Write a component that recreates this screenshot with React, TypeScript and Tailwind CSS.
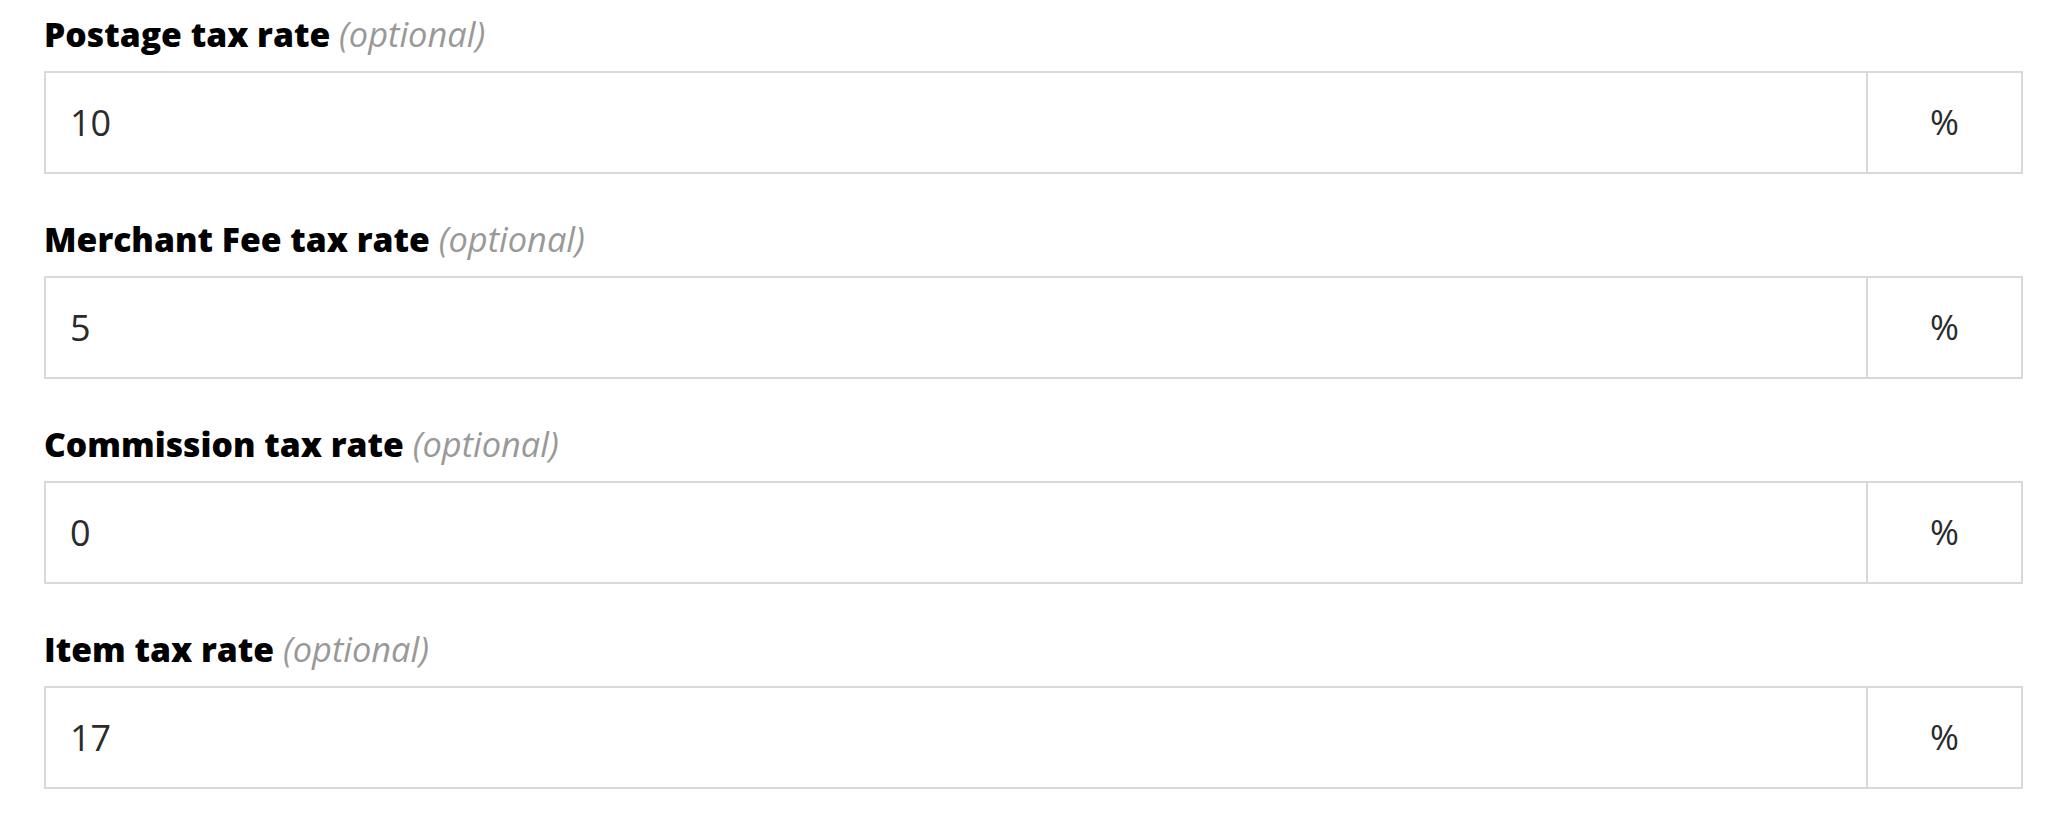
import React from "react";

const rows = [
  { label: "Postage tax rate", value: "10" },
  { label: "Merchant Fee tax rate", value: "5" },
  { label: "Commission tax rate", value: "0" },
  { label: "Item tax rate", value: "17" },
];

export default function App() {
  return (
    <div
      className="w-[2056px] h-[820px] bg-white pt-[10px] pl-[44px] pr-[33px]"
      style={{ fontFamily: '"Open Sans", "Noto Sans", sans-serif' }}
    >
      {rows.map((r) => (
        <div key={r.label} className="mb-[41px]">
          <div className="text-[34px] leading-[48px] mb-[13px] text-black">
            <span className="font-extrabold text-[33.7px]">{r.label}</span>{" "}
            <span className="italic text-[#999999] font-normal text-[34.4px]">(optional)</span>
          </div>
          <div className="flex h-[103px] border-2 border-[#d9d9d9]">
            <div className="flex-1 flex items-center pl-[24px] text-[36px] text-[#2b2b2b]">
              {r.value}
            </div>
            <div className="w-[155px] shrink-0 border-l-2 border-[#d9d9d9] flex items-center justify-center text-[35px] text-[#2b2b2b]">
              %
            </div>
          </div>
        </div>
      ))}
    </div>
  );
}
